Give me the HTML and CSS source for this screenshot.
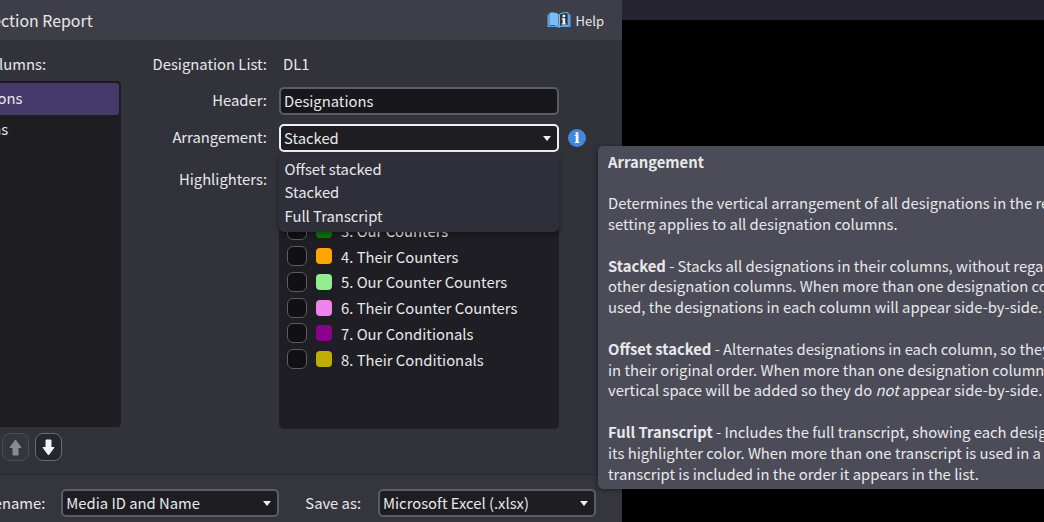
FILE: index.html
```html
<!DOCTYPE html>
<html lang="en">
<head>
  <meta charset="UTF-8" />
  <title>Selection Report</title>
  <link rel="stylesheet" href="styles.css">
</head>
<body>
  <div class="backdrop">
    <div class="strip"></div>
  </div>

  <div class="dialog">
    <div class="titlebar">
      <span class="title">Selection Report</span>
      <span class="help">
        <svg class="help-icon" width="24" height="16" viewBox="0 0 24 16">
          <path d="M0.5 2.5 L0.5 15 L10.5 15 L12 16 L13.5 15 L23.5 15 L23.5 2.5 L21.5 2.5 L21.5 14 L2.5 14 L2.5 2.5 Z" fill="#5aa5e8"/>
          <path d="M2.5 0.8 C6 0 9.5 0.6 11.5 2 L11.5 14.8 C9.5 13.5 6 13 2.5 13.6 Z" fill="#7cbcf5"/>
          <path d="M12.5 2.3 C14.5 0.8 18 0.2 21.2 0.9 L21.2 13.6 C18 13 14.5 13.5 12.5 14.8 Z" fill="#2a3442" stroke="#7cbcf5" stroke-width="1"/>
          <path d="M15.6 5.2 h2.6 v-2.4 h-2.6 Z M14.8 6.2 h3.4 v5.2 h1 v1.2 h-4.6 v-1.2 h1 v-4 h-0.8 Z" fill="#f2f2f2"/>
        </svg>
        Help
      </span>
    </div>

    <div class="main">
      <div class="columns-pane">
        <div class="pane-label">Columns:</div>
        <div class="column-list">
          <div class="column-item selected">Designations</div>
          <div class="column-item">Conditions</div>
        </div>
        <div class="move-buttons">
          <button class="icon-btn dim">
            <svg width="13" height="17" viewBox="0 0 13 17"><path d="M6.5 1 L12 8.5 L9 8.5 L9 16 L4 16 L4 8.5 L1 8.5 Z" fill="#8a8a92" stroke="#8a8a92" stroke-width="1" stroke-linejoin="round"/></svg>
          </button>
          <button class="icon-btn">
            <svg width="13" height="17" viewBox="0 0 13 17"><path d="M6.5 16 L12 8.5 L9 8.5 L9 1 L4 1 L4 8.5 L1 8.5 Z" fill="#f2f2f2" stroke="#f2f2f2" stroke-width="1" stroke-linejoin="round"/></svg>
          </button>
        </div>
      </div>

      <div class="form">
        <label class="form-label">Designation List:</label>
        <div class="plain-value">DL1</div>
        <span></span>

        <label class="form-label centered">Header:</label>
        <input class="text-input" type="text" value="Designations" />
        <span></span>

        <label class="form-label centered">Arrangement:</label>
        <div class="select focused">Stacked<i class="caret"></i></div>
        <span class="info-icon">i</span>

        <label class="form-label highlighter-label">Highlighters:</label>
        <div class="highlighter-list">
          <div class="highlighter"><i class="checkbox"></i><i class="swatch yellow"></i>1. Our Designations</div>
          <div class="highlighter"><i class="checkbox"></i><i class="swatch sky"></i>2. Their Designations</div>
          <div class="highlighter"><i class="checkbox"></i><i class="swatch green"></i>3. Our Counters</div>
          <div class="highlighter"><i class="checkbox"></i><i class="swatch orange"></i>4. Their Counters</div>
          <div class="highlighter"><i class="checkbox"></i><i class="swatch mint"></i>5. Our Counter Counters</div>
          <div class="highlighter"><i class="checkbox"></i><i class="swatch pink"></i>6. Their Counter Counters</div>
          <div class="highlighter"><i class="checkbox"></i><i class="swatch purple"></i>7. Our Conditionals</div>
          <div class="highlighter"><i class="checkbox"></i><i class="swatch olive"></i>8. Their Conditionals</div>
        </div>
        <span></span>
      </div>
    </div>

    <div class="footer">
      <span>Filename:</span>
      <div class="select footer-select">Media ID and Name<i class="caret"></i></div>
      <span class="save-label">Save as:</span>
      <div class="select footer-select save-select">Microsoft Excel (.xlsx)<i class="caret"></i></div>
    </div>
  </div>

  <div class="menu">
    <div>Offset stacked</div>
    <div>Stacked</div>
    <div>Full Transcript</div>
  </div>

  <div class="tooltip">
    <p><b>Arrangement</b></p>
    <p>Determines the vertical arrangement of all designations in the report. This<br>setting applies to all designation columns.</p>
    <p><b>Stacked</b> - Stacks all designations in their columns, without regard to<br>other designation columns. When more than one designation column is<br>used, the designations in each column will appear side-by-side.</p>
    <p><b>Offset stacked</b> - Alternates designations in each column, so they appear<br>in their original order. When more than one designation column is used,<br>vertical space will be added so they do <em>not</em> appear side-by-side.</p>
    <p><b>Full Transcript</b> - Includes the full transcript, showing each designation in<br>its highlighter color. When more than one transcript is used in a report, each<br>transcript is included in the order it appears in the list.</p>
  </div>
</body>
</html>
```

FILE: styles.css
```css
* {
  box-sizing: border-box;
  margin: 0;
  padding: 0;
}

html, body {
  width: 1044px;
  height: 522px;
  overflow: hidden;
  background-color: #000;
}

body {
  position: relative;
  font-family: "Noto Sans CJK SC", "Noto Sans", sans-serif;
  font-size: 14.8px;
  line-height: 21px;
  color: #e8e8ea;
}

.backdrop {
  position: absolute;
  inset: 0;
}

.strip {
  height: 20px;
  margin-left: 621px;
  background-color: #262430;
}

.dialog {
  position: absolute;
  left: -90px;
  top: 0;
  width: 712px;
  height: 522px;
  display: flex;
  flex-direction: column;
  background-color: #32323b;
}

.titlebar {
  height: 40px;
  flex: none;
  display: flex;
  justify-content: space-between;
  align-items: center;
  padding: 0 18px 0 59.5px;
  background-color: #3e3e48;
}

.title {
  font-size: 15.9px;
}

.help {
  display: flex;
  align-items: center;
  gap: 5px;
  font-size: 13px;
}

.main {
  flex: 1;
  display: flex;
  gap: 20px;
  padding: 13px 0 13px 12px;
}

.columns-pane {
  width: 199px;
  flex: none;
  display: flex;
  flex-direction: column;
}

.pane-label {
  text-align: right;
  padding-right: 75px;
  margin-bottom: 7px;
}

.column-list {
  flex: 1;
  padding: 2px;
  border-radius: 4px;
  background-color: #1d1d22;
}

.column-item {
  height: 32px;
  line-height: 28px;
  padding-left: 9px;
  border-radius: 3px;
}

.column-item.selected {
  line-height: 30px;
  background-color: #463a6b;
}

.move-buttons {
  display: flex;
  justify-content: flex-end;
  gap: 6px;
  margin-top: 6px;
  padding-right: 59px;
}

.icon-btn {
  width: 27px;
  height: 28px;
  display: flex;
  align-items: center;
  justify-content: center;
  border: 1.5px solid #6a6a74;
  border-radius: 8px;
  background-color: #26262d;
}

.icon-btn.dim {
  border-color: #4c4c56;
  background-color: #35353e;
}

.form {
  display: grid;
  grid-template-columns: 126px 280px 30px;
  grid-template-rows: 25px 28px 28px 268px;
  column-gap: 12px;
  row-gap: 9px;
}

.form-label {
  text-align: right;
}

.form-label.centered {
  line-height: 26px;
}

.plain-value {
  padding-left: 4px;
}

.highlighter-label {
  padding-top: 7px;
}

.text-input, .select {
  height: 28px;
  padding: 0 3px;
  border: 2px solid #5c5c66;
  border-radius: 5px;
  background-color: #17171c;
  color: #e8e8ea;
  font: inherit;
  line-height: 24px;
  outline: none;
}

.text-input {
  padding-bottom: 2px;
}

.select {
  position: relative;
  background-color: #1d1d22;
}

.select.focused {
  border-color: #f0f0f0;
}

.caret {
  position: absolute;
  right: 6px;
  top: 10px;
  border-left: 4.5px solid transparent;
  border-right: 4.5px solid transparent;
  border-top: 5px solid #f0f0f0;
}

.info-icon {
  width: 18px;
  height: 18px;
  margin: 5px 0 0 -3px;
  border-radius: 50%;
  background-color: #4388dc;
  color: #fff;
  font-family: "DejaVu Serif", serif;
  font-size: 14px;
  font-weight: bold;
  line-height: 18px;
  text-align: center;
}

.highlighter-list {
  padding-top: 5px;
  border-radius: 5px;
  background-color: #1e1e24;
}

.highlighter {
  height: 25.75px;
  display: flex;
  align-items: center;
  padding-left: 8px;
}

.checkbox {
  width: 20px;
  height: 20px;
  margin-right: 9px;
  border: 1.5px solid #5c5c66;
  border-radius: 6px;
  background-color: #111114;
}

.swatch {
  width: 16px;
  height: 16px;
  margin-right: 9px;
  border-radius: 4px;
}

.yellow { background-color: #e6e600; }
.sky { background-color: #6ec6ff; }
.green { background-color: #0a7a0a; }
.orange { background-color: #ffa500; }
.mint { background-color: #90ee90; }
.pink { background-color: #ee82ee; }
.purple { background-color: #8b008b; }
.olive { background-color: #bfae00; }

.footer {
  height: 48px;
  flex: none;
  display: flex;
  justify-content: flex-end;
  align-items: flex-start;
  padding: 14px 26px 0 0;
  border-top: 1px solid #2a2a31;
  background-color: #35353e;
  line-height: 28px;
}

.footer .select {
  line-height: 24px;
}

.footer-select {
  width: 218px;
  margin-left: 16px;
}

.save-select {
  margin-left: 17px;
}

.save-label {
  margin-left: 26px;
}

.menu {
  position: absolute;
  left: 279px;
  top: 154px;
  width: 280px;
  height: 78px;
  padding: 3px 5.5px;
  border-radius: 0 0 5px 5px;
  background-color: #2f2f39;
  box-shadow: 0 2px 6px rgba(0, 0, 0, 0.4);
  line-height: 23.4px;
}

.tooltip {
  position: absolute;
  left: 598px;
  top: 146px;
  width: 520px;
  height: 343px;
  padding: 5.6px 10px;
  border-radius: 5px;
  background-color: #4c4c58;
  box-shadow: -1px 1px 4px rgba(0, 0, 0, 0.4);
  line-height: 20.8px;
  white-space: nowrap;
}

.tooltip p {
  margin-bottom: 20.8px;
}
```
